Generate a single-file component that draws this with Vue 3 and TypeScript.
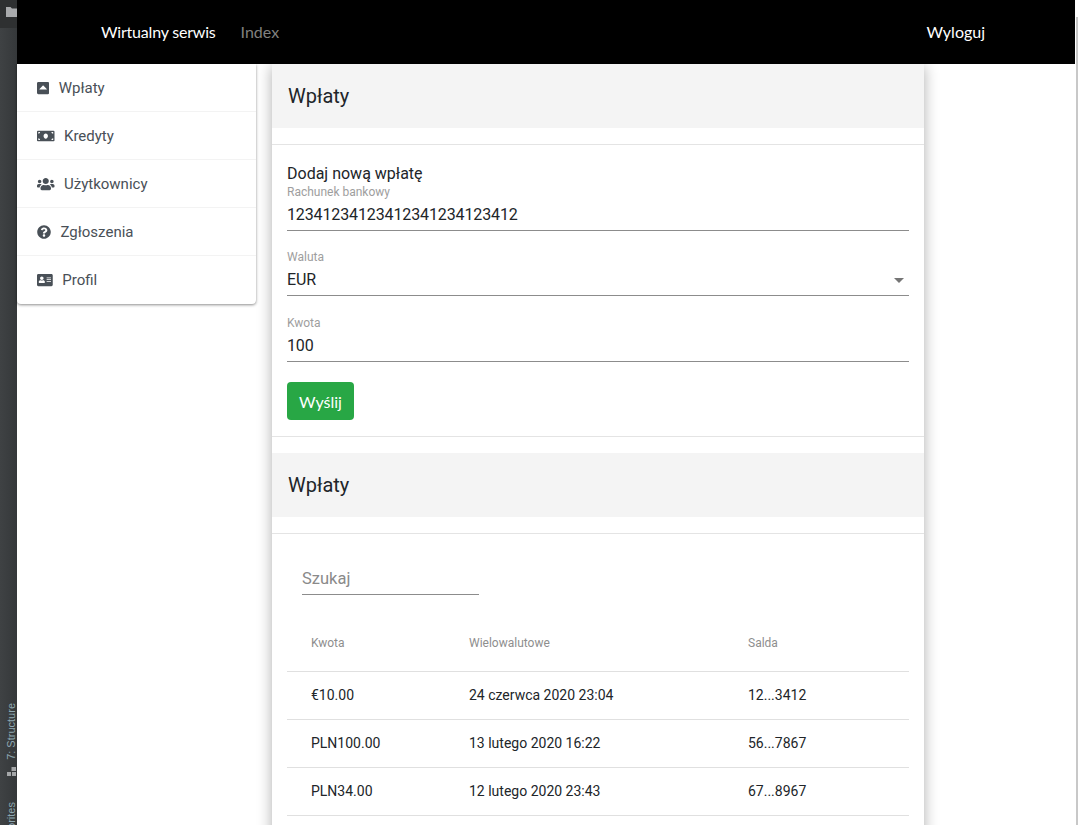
<script setup lang="ts">
interface MenuItem { label: string; vb: string; w: number; d: string }
const menu: MenuItem[] = [
  { label: 'Wpłaty', vb: '0 0 448 512', w: 12.25, d: 'M0 432V80c0-26.5 21.5-48 48-48h352c26.5 0 48 21.5 48 48v352c0 26.5-21.5 48-48 48H48c-26.5 0-48-21.5-48-48zm355.515-140.485l-123.03-123.03c-4.686-4.686-12.284-4.686-16.971 0L92.485 291.515c-7.56 7.56-2.206 20.485 8.485 20.485h246.059c10.691 0 16.045-12.926 8.486-20.485z' },
  { label: 'Kredyty', vb: '0 0 640 512', w: 17.5, d: 'M608 64H32C14.33 64 0 78.33 0 96v320c0 17.67 14.33 32 32 32h576c17.67 0 32-14.33 32-32V96c0-17.67-14.33-32-32-32zM48 400v-64c35.35 0 64 28.65 64 64H48zm0-224v-64h64c0 35.35-28.65 64-64 64zm272 176c-44.19 0-80-42.99-80-96 0-53.02 35.82-96 80-96s80 42.98 80 96c0 53.03-35.83 96-80 96zm272 48h-64c0-35.35 28.65-64 64-64v64zm0-224c-35.35 0-64-28.65-64-64h64v64z' },
  { label: 'Użytkownicy', vb: '0 0 640 512', w: 17.5, d: 'M96 224c35.3 0 64-28.7 64-64s-28.7-64-64-64-64 28.7-64 64 28.7 64 64 64zm448 0c35.3 0 64-28.7 64-64s-28.7-64-64-64-64 28.7-64 64 28.7 64 64 64zm32 32h-64c-17.6 0-33.5 7.1-45.1 18.6 40.3 22.1 68.9 62 75.1 109.4h66c17.7 0 32-14.3 32-32v-32c0-35.3-28.7-64-64-64zm-256 0c61.9 0 112-50.1 112-112S381.9 32 320 32 208 82.1 208 144s50.1 112 112 112zm76.8 32h-8.3c-20.8 10-43.9 16-68.5 16s-47.6-6-68.5-16h-8.3C179.6 288 128 339.6 128 403.2V432c0 26.5 21.5 48 48 48h288c26.5 0 48-21.5 48-48v-28.8c0-63.6-51.6-115.2-115.2-115.2zm-223.7-13.4C161.5 263.1 145.6 256 128 256H64c-35.3 0-64 28.7-64 64v32c0 17.7 14.3 32 32 32h65.9c6.3-47.4 34.9-87.3 75.2-109.4z' },
  { label: 'Zgłoszenia', vb: '0 0 512 512', w: 14, d: 'M504 256c0 136.997-111.043 248-248 248S8 392.997 8 256C8 119.083 119.043 8 256 8s248 111.083 248 248zM262.655 90c-54.497 0-89.255 22.957-116.549 63.758-3.536 5.286-2.353 12.415 2.715 16.258l34.699 26.31c5.205 3.947 12.621 3.008 16.665-2.122 17.864-22.658 30.113-35.797 57.303-35.797 20.429 0 45.698 13.148 45.698 32.958 0 14.976-12.363 22.667-32.534 33.976C247.128 238.528 216 254.941 216 296v4c0 6.627 5.373 12 12 12h56c6.627 0 12-5.373 12-12v-1.333c0-28.462 83.186-29.647 83.186-106.667 0-58.002-60.165-102-116.531-102zM256 338c-25.365 0-46 20.635-46 46 0 25.364 20.635 46 46 46s46-20.636 46-46c0-25.365-20.635-46-46-46z' },
  { label: 'Profil', vb: '0 0 576 512', w: 15.75, d: 'M528 32H48C21.5 32 0 53.5 0 80v352c0 26.5 21.5 48 48 48h480c26.5 0 48-21.5 48-48V80c0-26.5-21.5-48-48-48zM176 128c35.3 0 64 28.7 64 64s-28.7 64-64 64-64-28.7-64-64 28.7-64 64-64zm112 217.600c0 10.600-10 19.200-22.400 19.200H86.400C74 364.800 64 356.200 64 345.600v-19.200c0-31.800 30.100-57.600 67.200-57.600h5c12.300 5.100 25.700 8 39.800 8s27.600-2.900 39.800-8h5c37.100 0 67.200 25.800 67.200 57.600v19.200zM512 312c0 4.400-3.600 8-8 8H360c-4.400 0-8-3.600-8-8v-16c0-4.400 3.600-8 8-8h144c4.400 0 8 3.600 8 8v16zm0-64c0 4.400-3.600 8-8 8H360c-4.400 0-8-3.600-8-8v-16c0-4.400 3.600-8 8-8h144c4.400 0 8 3.600 8 8v16zm0-64c0 4.400-3.600 8-8 8H360c-4.400 0-8-3.600-8-8v-16c0-4.400 3.600-8 8-8h144c4.400 0 8 3.600 8 8v16z' },
]
const rows = [
  { amount: '€10.00', date: '24 czerwca 2020 23:04', acc: '12...3412' },
  { amount: 'PLN100.00', date: '13 lutego 2020 16:22', acc: '56...7867' },
  { amount: 'PLN34.00', date: '12 lutego 2020 23:43', acc: '67...8967' },
]
</script>

<template>
  <div class="screen">
    <aside class="ide">
      <div class="ide-top">
        <svg class="folder" width="11" height="10" viewBox="0 0 11 10"><path d="M0 0h4.500l1.500 1.500H11V10H0z" fill="#a8aaac" /></svg>
      </div>
      <div class="ide-tabs">
        <span class="ide-label">7: Structure</span>
        <svg class="ide-icon" width="9" height="9" viewBox="0 0 9 9"><path d="M4.500 0H9v4H4.500zM0 5h4v4H0zM5 5h4v4H5z" fill="#a4a6a8" /></svg>
        <span class="ide-label cut">Favorites</span>
      </div>
    </aside>
    <div class="page">
      <header class="nav">
        <a class="brand">Wirtualny serwis</a>
        <a class="link">Index</a>
        <a class="logout">Wyloguj</a>
      </header>
      <div class="body">
        <nav class="side">
          <div v-for="m in menu" :key="m.label" class="side-item">
            <svg class="side-icon" :width="m.w" height="14" :viewBox="m.vb"><path :d="m.d" fill="#495057" /></svg>
            <span>{{ m.label }}</span>
          </div>
        </nav>
        <main class="card">
          <div class="head"><h2>Wpłaty</h2></div>
          <hr class="rule first" />
          <form class="form" @submit.prevent>
            <div class="form-title">Dodaj nową wpłatę</div>
            <div class="field">
              <label>Rachunek bankowy</label>
              <div class="value">12341234123412341234123412</div>
            </div>
            <div class="field">
              <label>Waluta</label>
              <div class="value select">EUR<i class="caret"></i></div>
            </div>
            <div class="field third">
              <label>Kwota</label>
              <div class="value">100</div>
            </div>
            <button class="send" type="button">Wyślij</button>
          </form>
          <hr class="rule flush" />
          <div class="head second"><h2>Wpłaty</h2></div>
          <hr class="rule first" />
          <div class="list">
            <div class="search">Szukaj</div>
            <table>
              <thead>
                <tr><th class="c1">Kwota</th><th class="c2">Wielowalutowe</th><th>Salda</th></tr>
              </thead>
              <tbody>
                <tr v-for="r in rows" :key="r.date">
                  <td>{{ r.amount }}</td><td>{{ r.date }}</td><td>{{ r.acc }}</td>
                </tr>
              </tbody>
            </table>
          </div>
        </main>
      </div>
    </div>
    <div class="edge"><div class="edge-bar"></div></div>
  </div>
</template>

<style>
html, body { margin: 0; height: 100%; overflow: hidden; background: #fff; }
</style>

<style scoped>
.screen { display: flex; height: 825px; overflow: hidden; font-family: Roboto, "Liberation Sans", sans-serif; color: #212529; }
.ide { width: 17px; flex: none; display: flex; flex-direction: column; background: #3c3f41; }
.ide-top { height: 28px; background: #2e3031; padding: 7px 0 0 6px; box-sizing: border-box; overflow: hidden; }
.folder { display: block; }
.ide-tabs { flex: 1; min-height: 0; display: flex; flex-direction: column; align-items: flex-start; justify-content: flex-end; padding-left: 5px; overflow: hidden; background: linear-gradient(90deg, #3f4244, #35383a); }
.ide-label { writing-mode: vertical-rl; transform: rotate(180deg); font: 11px/13px "Liberation Sans", sans-serif; color: #8fa8b2; flex: none; }
.ide-icon { margin: 7px 0 26px 2px; flex: none; }
.ide-label.cut { margin-bottom: -22px; }
.page { width: 1058px; flex: none; display: flex; flex-direction: column; }
.nav { height: 64px; flex: none; box-sizing: border-box; background: #000; display: flex; align-items: center; padding: 0 90px 2px 84px; font: 16px Lato, "Liberation Sans", sans-serif; }
.brand { color: #fff; margin-right: 25px; letter-spacing: -0.2px; }
.link { color: #80807f; }
.logout { color: #fff; margin-left: auto; }
.body { flex: 1; display: flex; align-items: flex-start; gap: 16px; min-height: 0; }
.side { width: 239px; flex: none; background: #fff; border-radius: 0 0 4px 4px; box-shadow: 0 1px 3px rgba(0, 0, 0, 0.45); }
.side-item { height: 48px; display: flex; align-items: center; gap: 9.500px; padding: 1px 0 0 20px; box-sizing: border-box; font-size: 15px; color: #495057; border-bottom: 1px solid #f3f3f3; }
.side-item:last-child { border-bottom: 0; padding-top: 0; }
.side-icon { flex: none; }
.card { width: 652px; flex: none; background: #fff; box-shadow: 0 2px 14px rgba(0, 0, 0, 0.32); }
.head { height: 64px; background: #f4f4f4; display: flex; align-items: center; padding-left: 16px; }
.head h2 { margin: 0; font-size: 20px; font-weight: 400; color: #212529; }
.head.second { margin-top: 16px; }
.rule { margin: 16px 0 0; border: 0; border-top: 1px solid #e4e4e4; height: 0; }
.rule.flush { margin-top: 0; }
.form { padding: 19px 15px 16px; }
.form-title { font-size: 16px; line-height: 20px; }
.field { margin-bottom: 18px; }
.field label { display: block; font-size: 12px; line-height: 16px; color: #9e9e9e; }
.value { position: relative; height: 31px; box-sizing: border-box; border-bottom: 1px solid #8c8c8c; font-size: 16px; line-height: 30px; letter-spacing: -0.12px; color: #212529; }
.third { margin-top: 19px; }
.third .value { line-height: 29px; }
.caret { position: absolute; right: 5px; top: 13px; border: 5px solid transparent; border-top-color: #757575; border-bottom: 0; }
.send { display: block; width: 67px; height: 38px; margin: 20px 0 0; border: 0; border-radius: 4px; background: #28a745; color: #fff; font: 16px Lato, "Liberation Sans", sans-serif; padding: 0; }
.list { padding: 28px 15px 48px; }
.search { width: 177px; margin-left: 15px; height: 33px; box-sizing: border-box; border-bottom: 1px solid #8c8c8c; font-size: 16.500px; line-height: 34px; color: #8a8a8a; }
table { width: 622px; margin-top: 24px; border-collapse: collapse; table-layout: fixed; font-size: 14px; }
th { height: 52px; padding: 0 0 4px 24px; text-align: left; font-size: 12px; font-weight: 400; color: #8e8e8e; border-bottom: 1px solid #e0e0e0; box-sizing: border-box; }
th.c1 { width: 158px; }
th.c2 { width: 279px; }
td { height: 48px; padding: 0 0 0 24px; border-bottom: 1px solid #e0e0e0; box-sizing: border-box; color: #212529; }
.edge { width: 3px; flex: none; padding: 17px 0 0 1px; box-sizing: border-box; }
.edge-bar { height: 100%; background: #c8c8c8; }
</style>
